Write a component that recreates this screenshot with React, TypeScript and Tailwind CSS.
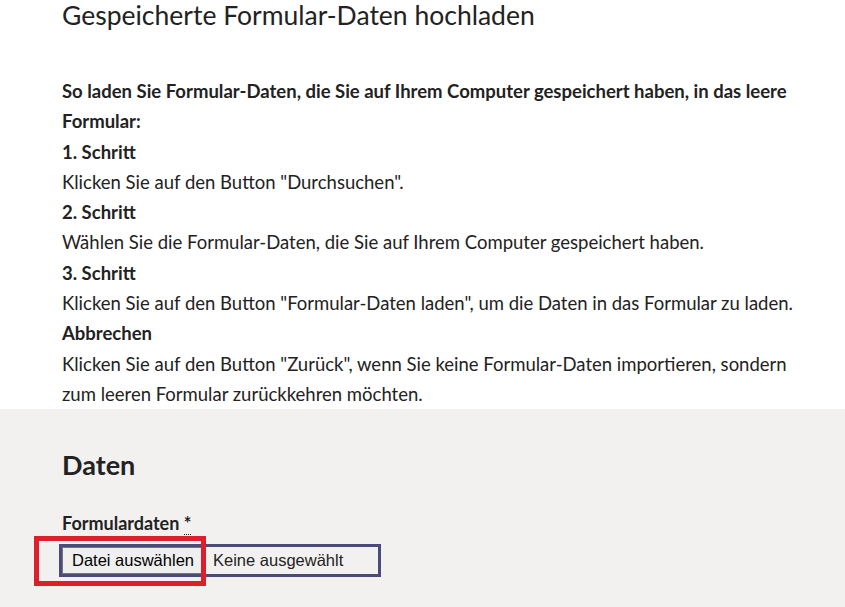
const steps = [
  { title: "1. Schritt", text: 'Klicken Sie auf den Button "Durchsuchen".' },
  { title: "2. Schritt", text: "Wählen Sie die Formular-Daten, die Sie auf Ihrem Computer gespeichert haben." },
  { title: "3. Schritt", text: 'Klicken Sie auf den Button "Formular-Daten laden", um die Daten in das Formular zu laden.' },
  {
    title: "Abbrechen",
    text: 'Klicken Sie auf den Button "Zurück", wenn Sie keine Formular-Daten importieren, sondern zum leeren Formular zurückkehren möchten.',
  },
];

export default function App() {
  return (
    <div className="min-h-[607px] bg-[#f3f1f0] font-['Lato',sans-serif] text-[#222222]">
      {/* Intro — white */}
      <section className="bg-white pl-[62px] pr-[30px]">
        <h1 className="text-[26.5px] leading-[31px] font-normal">Gespeicherte Formular-Daten hochladen</h1>
        <div className="mt-[45px] max-w-[748px] text-[18.5px] leading-[30.3px]">
          <p className="font-bold">
            So laden Sie Formular-Daten, die Sie auf Ihrem Computer gespeichert haben, in das leere Formular:
          </p>
          {steps.map((s) => (
            <div key={s.title}>
              <p className="font-bold">{s.title}</p>
              <p>{s.text}</p>
            </div>
          ))}
        </div>
      </section>

      {/* Daten — grey */}
      <section className="pl-[62px] pt-[40px]">
        <h2 className="text-[27px] leading-[32px] font-bold">Daten</h2>
        <label className="mt-[30px] block text-[18px] leading-[24px] font-bold">
          Formulardaten{" "}
          <abbr title="Pflichtfeld" className="no-underline border-b border-dotted border-[#222]">
            *
          </abbr>
        </label>
        <div className="relative mt-[9px] -ml-[3px] inline-block">
          <div className="flex h-[33px] w-[322px] items-center border-[3px] border-[#4b4a7c] bg-[#f3f1f0] font-['Liberation_Sans',Arial,sans-serif] text-[16.5px] text-black">
            <span className="flex h-full items-center border border-[#767676] bg-[#efefef] px-[9px]">
              Datei auswählen
            </span>
            <span className="pl-[9px] text-[#222]">Keine ausgewählt</span>
          </div>
          {/* highlight frame */}
          <div className="pointer-events-none absolute -left-[25px] -top-[8px] h-[50px] w-[172px] border-[5px] border-[#dc1f2b]" />
        </div>
      </section>
    </div>
  );
}
